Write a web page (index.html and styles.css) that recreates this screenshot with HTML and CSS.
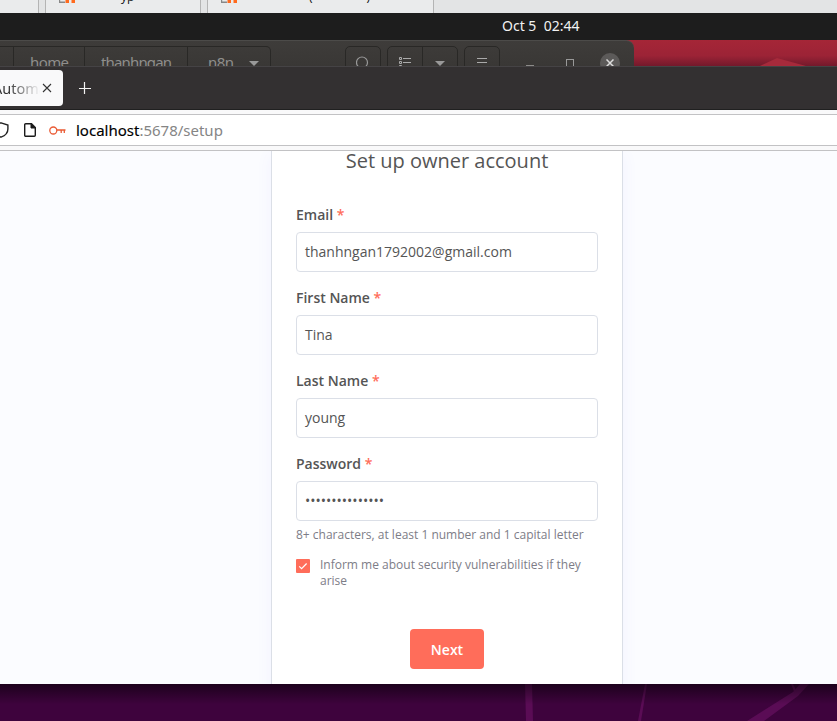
FILE: index.html
```html
<!DOCTYPE html>
<html lang="en">
<head>
<meta charset="utf-8">
<title>Set up owner account</title>
<link rel="stylesheet" href="styles.css">
</head>
<body>
<div class="desktop">
  <div class="host-tabs">
    <div class="host-tab host-tab-edge"></div>
    <div class="host-tab host-tab-one">
      <svg class="host-logo" width="18" height="13" viewBox="0 0 18 13"><path d="M1 0v10h6V8.500H2.200V0z" fill="#888"/><path d="M7.500 0h3.500v10H7.500zM13.500 0H17v10h-3.500z" fill="#ff6a1d"/></svg>
      <span class="host-title">yp</span>
    </div>
    <div class="host-tab host-tab-two">
      <svg class="host-logo" width="18" height="13" viewBox="0 0 18 13"><path d="M1 0v10h6V8.500H2.200V0z" fill="#888"/><path d="M7.500 0h3.500v10H7.500zM13.500 0H17v10h-3.500z" fill="#ff6a1d"/></svg>
      <span class="host-title paren"><span>(</span><span>)</span></span>
    </div>
  </div>
  <div class="topbar"><time>Oct 5&nbsp; 02:44</time></div>
  <div class="behind">
    <svg class="peak" width="60" height="10" viewBox="0 0 60 10"><path d="M0 9 17 1 46 9z" fill="#a62a3b"/></svg>
    <header class="files">
      <nav class="crumbs">
        <span class="crumb crumb-root"></span>
        <span class="crumb crumb-home">home</span>
        <span class="crumb crumb-user">thanhngan</span>
        <span class="crumb crumb-dir">n8n<i class="caret"></i></span>
      </nav>
      <div class="tools">
        <span class="tool"><svg width="14" height="14" viewBox="0 0 14 14"><circle cx="6" cy="6.500" r="5.500" fill="none" stroke="#999" stroke-width="1.2"/></svg></span>
        <span class="tool-pair">
          <span class="tool-half"><svg width="14" height="14" viewBox="0 0 14 14" fill="none" stroke="#aaa"><path d="M1.500 1.500h2v2h-2zM1.500 5.500h2v2h-2zM1.500 9.500h2v2h-2zM5 2.500h8M5 6.500h8M5 10.500h8"/></svg></span>
          <span class="tool-half"><i class="caret"></i></span>
        </span>
        <span class="tool"><svg width="12" height="12" viewBox="0 0 12 12" stroke="#aaa"><path d="M1 2.500h10M1 6.500h10M1 10.500h10"/></svg></span>
      </div>
      <div class="controls">
        <i class="min"></i><i class="max"></i>
        <span class="close"><svg width="8" height="8" viewBox="0 0 8 8"><path d="m.5.5 7 7m0-7-7 7" stroke="#ddd" stroke-width="1.500"/></svg></span>
      </div>
    </header>
  </div>
  <div class="browser">
    <div class="tabs">
      <div class="tab"><span class="tab-title">Automation</span><svg width="10" height="10" viewBox="0 0 10 10"><path d="m1 1 8 8m0-8-8 8" stroke="#333" stroke-width="1.1"/></svg></div>
      <svg class="plus" width="12" height="12" viewBox="0 0 12 12"><path d="M5.500 0v12M0 6.500h12" stroke="#f2f2f2" stroke-width="1.200"/></svg>
    </div>
    <div class="toolbar">
      <div class="urlbar">
        <svg class="shield" width="17" height="16" viewBox="0 0 17 16"><path d="M8 .8 14.900 3v4c0 4-3 6.800-6.900 8.200C4 13.800 1 11 1 7V3z" fill="none" stroke="#222" stroke-width="1.400"/></svg>
        <svg class="doc" width="12" height="14" viewBox="0 0 12 14"><path d="M1.700.8H7.500l3.800 3.800v7.600a1 1 0 0 1-1 1H1.700a1 1 0 0 1-1-1V1.800a1 1 0 0 1 1-1z" fill="none" stroke="#1b1b1b" stroke-width="1.400"/><path d="M7 1v4h4z" fill="#1b1b1b" stroke="#1b1b1b"/></svg>
        <svg class="key" width="17" height="9" viewBox="0 0 17 9"><g fill="none" stroke="#ea5b35" stroke-width="1.300"><circle cx="4.300" cy="4.500" r="3.500"/><path d="M8 4h8.500M12.200 4v3M15.300 4v3"/></g></svg>
        <span class="url"><b>localhost</b>:5678/setup</span>
      </div>
    </div>
    <main class="page">
      <form class="card">
        <h1>Set up owner account</h1>
        <div class="field"><label>Email <em>*</em></label><div class="input">thanhngan1792002@gmail.com</div></div>
        <div class="field"><label>First Name <em>*</em></label><div class="input">Tina</div></div>
        <div class="field"><label>Last Name <em>*</em></label><div class="input">young</div></div>
        <div class="field"><label>Password <em>*</em></label><div class="input">•••••••••••••••</div></div>
        <p class="hint">8+ characters, at least 1 number and 1 capital letter</p>
        <div class="agree">
          <span class="check"><svg width="14" height="14" viewBox="0 0 14 14"><path d="m3.200 7.300 2.400 2.400 5-5.200" fill="none" stroke="#fff" stroke-width="1.200"/></svg></span>
          <span>Inform me about security vulnerabilities if they arise</span>
        </div>
        <div class="next">Next</div>
      </form>
    </main>
  </div>
  <div class="wallpaper">
    <svg width="837" height="37" viewBox="0 0 837 37"><g fill="#5a0c55"><path d="M525 0h7l1 37h-7z"/><path d="m645 0h2l-6 37h-3z"/><path d="M800 0h9L798 12 764 37h-17l46-29z"/><path d="m791 0h2l4 8-2 2z"/></g></svg>
  </div>
</div>
</body>
</html>
```
FILE: styles.css
```css
* { box-sizing: border-box; }
body { margin: 0; font-family: "Open Sans", "Noto Sans", sans-serif; overflow: hidden; }
svg { display: block; flex: none; }
i { font-style: normal; }
.desktop { width: 837px; height: 721px; display: flex; flex-direction: column; overflow: hidden; }

.host-tabs { height: 13px; flex: none; display: flex; gap: 6px; background: #e3e4e5; overflow: hidden; }
.host-tab { display: flex; flex: none; height: 13px; background: #eaebec; border-right: 1px solid #b4b4b4; border-left: 1px solid #b4b4b4; }
.host-tab-edge { width: 39px; border-left: 0; }
.host-tab-one { width: 156px; padding-left: 12px; }
.host-tab-two { width: 227px; padding-left: 12px; }
.host-logo { margin-top: -7px; }
.host-title { margin: -11px 0 0 45px; font: 12px/16px "Open Sans", sans-serif; color: #111; }
.host-tab-two .host-title { margin-left: 71px; }
.paren { display: flex; gap: 54px; }

.topbar { height: 27px; flex: none; background: #1d1d1d; color: #f2f2f2; font: 14px/25px "Noto Sans", sans-serif; padding-left: 502px; }
.topbar time { white-space: nowrap; }

.behind { height: 26px; flex: none; display: flex; position: relative; overflow: hidden; background: linear-gradient(#a52637, #9c2336 60%, #74192b); }
.peak { position: absolute; left: 760px; top: 17px; }
.files { width: 634px; height: 46px; flex: none; display: flex; background: linear-gradient(#3e3c3a, #393735 26px); border-top: 1px solid #4c4b49; border-radius: 0 8px 0 0; padding-top: 5px; color: #8f8e8c; font: 15px/31px "Noto Sans", sans-serif; }
.crumbs { display: flex; flex: none; width: 271px; height: 36px; border: 1px solid #292826; border-left: 0; border-radius: 0 5px 0 0; }
.crumb { border-right: 1px solid #292826; }
.crumb-root { width: 14px; }
.crumb-home { width: 71px; padding-left: 16px; letter-spacing: -.6px; }
.crumb-user { width: 103px; padding-left: 16px; letter-spacing: -.85px; }
.crumb-dir { display: flex; padding-left: 20px; gap: 15px; border: 0; letter-spacing: -.5px; }
.caret { width: 0; height: 0; margin-top: 14px; border: 5px solid transparent; border-top-color: #999; border-bottom: 0; }
.tools { display: flex; gap: 6px; margin-left: 74px; }
.tool, .tool-pair { display: flex; justify-content: center; height: 36px; border: 1px solid #292826; border-radius: 5px 5px 0 0; width: 36px; padding-top: 9px; }
.tool-pair { width: 71px; padding: 0; }
.tool-half { flex: 1; display: flex; justify-content: center; padding-top: 9px; }
.tool-half + .tool-half { border-left: 1px solid #292826; }
.tool-half .caret { margin-top: 5px; }
.controls { display: flex; margin-left: 25px; }
.min { width: 8px; height: 2px; background: #8c8b89; margin: 19px 32px 0 1px; }
.max { width: 8px; height: 10px; border: 1px solid #999; margin: 13px 26px 0 0; }
.close { width: 20px; height: 20px; flex: none; margin-top: 7px; border-radius: 50%; background: #5c5a59; display: grid; place-items: center; }

.browser { flex: none; height: 618px; display: flex; flex-direction: column; }
.tabs { height: 44px; flex: none; background: #333031; border-top: 1px solid #454345; border-bottom: 1px solid #202020; display: flex; padding-top: 3px; }
.tab { width: 63px; height: 36px; border-radius: 0 4px 4px 0; background: #f9f9fa; display: flex; align-items: center; color: #333; }
.tab-title { width: 42px; flex: none; overflow: hidden; white-space: nowrap; text-indent: -7px; font: 14.5px/36px "Noto Sans", sans-serif; -webkit-mask-image: linear-gradient(90deg, #000 20%, transparent 96%); }
.plus { margin: 12px 0 0 16px; }
.toolbar { height: 41px; flex: none; background: #f9f9fa; padding: 4px 0; border-bottom: 1px solid #c2c2c4; }
.urlbar { height: 32px; background: #fff; border: 1px solid #c2c2c4; border-width: 1px 0; display: flex; align-items: center; overflow: hidden; }
.shield { margin-left: -7px; }
.doc { margin-left: 14px; }
.key { margin-left: 13px; }
.url { margin-left: 10px; font: 15px/30px "Noto Sans", sans-serif; color: #858585; white-space: nowrap; }
.url b { font-weight: 400; color: #000; -webkit-text-stroke: .15px #000; }

.page { height: 533px; flex: none; background: #fbfcff; display: flex; overflow: hidden; padding-left: 271px; }
.card { width: 352px; height: 560px; flex: none; background: #fff; border: 1px solid #dbdfe7; border-width: 0 1px; padding: 0 24px; color: #555; box-shadow: 0 4px 16px #6358ff0f; }
h1 { margin: -4px 0 32px; font-size: 20px; line-height: 27px; font-weight: 400; text-align: center; }
.field { display: flex; flex-direction: column; gap: 8px; height: 83px; }
.field label { height: 18px; font-size: 14px; line-height: 18px; font-weight: 600; white-space: nowrap; }
.field em { font-style: normal; color: #ff6d5a; }
.input { height: 40px; border: 1px solid #dbdfe7; border-radius: 4px; padding: 0 8px; font-size: 14px; line-height: 38px; color: #555; }
.hint { margin: -11px 0 0; font-size: 12px; line-height: 16px; color: #7d7d87; white-space: nowrap; }
.agree { display: flex; gap: 10px; margin-top: 14px; font-size: 12px; line-height: 16px; color: #7d7d87; }
.check { width: 14px; height: 14px; flex: none; margin-top: 2px; border-radius: 1px; background: #ff6d5a; }
.next { width: 74px; height: 40px; margin: 40px auto 0; border-radius: 4px; background: #ff6d5a; color: #fff; font-size: 14px; line-height: 41px; font-weight: 600; text-align: center; }

.wallpaper { height: 37px; flex: none; background: #3e033d; position: relative; }
.wallpaper::after { content: ""; position: absolute; inset: 0; background: linear-gradient(#0008, transparent 55%); }
```
